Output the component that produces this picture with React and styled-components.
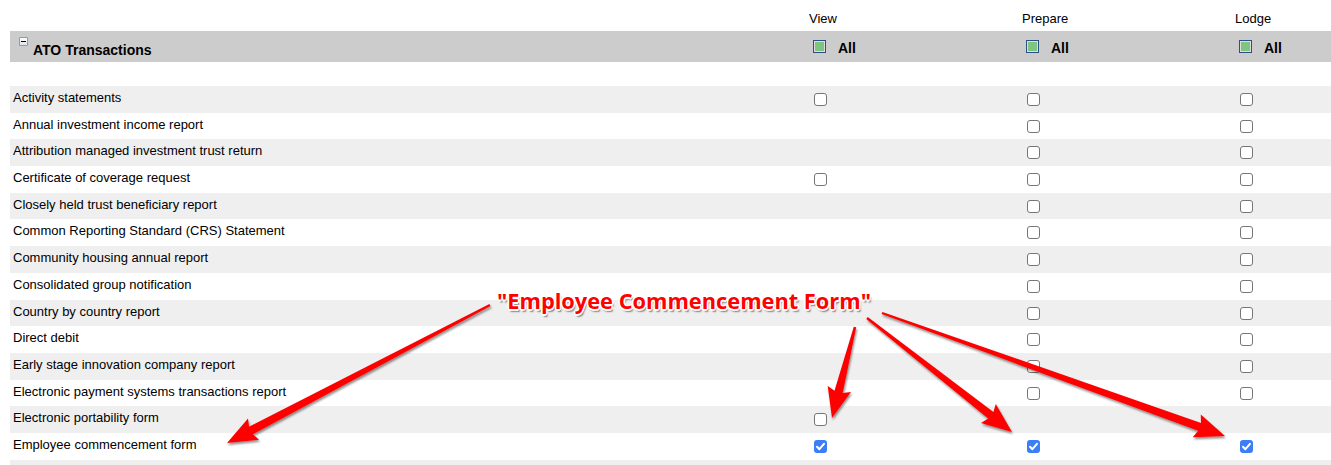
import React from "react"
import styled, { createGlobalStyle } from "styled-components"

const GlobalStyle = createGlobalStyle`
  html, body { margin: 0; padding: 0; background: #ffffff; }
  body { font-family: "Liberation Sans", Arial, sans-serif; color: #000; overflow: hidden; }
`

const COLS = "800px 213px 213px 1fr"

const rows = [
  { name: "Activity statements", v: 0, p: 0, l: 0 },
  { name: "Annual investment income report", p: 0, l: 0 },
  { name: "Attribution managed investment trust return", p: 0, l: 0 },
  { name: "Certificate of coverage request", v: 0, p: 0, l: 0 },
  { name: "Closely held trust beneficiary report", p: 0, l: 0 },
  { name: "Common Reporting Standard (CRS) Statement", p: 0, l: 0 },
  { name: "Community housing annual report", p: 0, l: 0 },
  { name: "Consolidated group notification", p: 0, l: 0 },
  { name: "Country by country report", p: 0, l: 0 },
  { name: "Direct debit", p: 0, l: 0 },
  { name: "Early stage innovation company report", p: 0, l: 0 },
  { name: "Electronic payment systems transactions report", p: 0, l: 0 },
  { name: "Electronic portability form", v: 0 },
  { name: "Employee commencement form", v: 1, p: 1, l: 1 },
  { name: "" },
]

// annotation arrows: start -> tip
const arrows = [
  { s: [490, 305], t: [227, 443] },
  { s: [855, 327], t: [832, 418] },
  { s: [867, 318], t: [1012, 432] },
  { s: [882, 313], t: [1225, 436] },
]

function arrowPoints({ s, t }) {
  const dx = t[0] - s[0]
  const dy = t[1] - s[1]
  const len = Math.hypot(dx, dy)
  const ux = dx / len, uy = dy / len
  const nx = -uy, ny = ux
  const head = 27, hw = 12, w0 = 1.2, w1 = 4.2
  const bx = t[0] - ux * head, by = t[1] - uy * head
  const p = [
    [s[0] + nx * w0, s[1] + ny * w0],
    [bx + nx * w1, by + ny * w1],
    [bx + nx * hw - ux * 3, by + ny * hw - uy * 3],
    [t[0], t[1]],
    [bx - nx * hw - ux * 3, by - ny * hw - uy * 3],
    [bx - nx * w1, by - ny * w1],
    [s[0] - nx * w0, s[1] - ny * w0],
  ]
  return p.map((q) => q[0].toFixed(1) + "," + q[1].toFixed(1)).join(" ")
}

function Box({ checked }) {
  if (checked) {
    return (
      <Styled.Checked>
        <svg width="13" height="13" viewBox="0 0 13 13">
          <path d="M3 6.8 L5.4 9.2 L10 3.8" fill="none" stroke="#fff" strokeWidth="2" strokeLinecap="round" strokeLinejoin="round" />
        </svg>
      </Styled.Checked>
    )
  }
  return <Styled.Unchecked />
}

function Cell({ value }) {
  return <Styled.BoxCell>{value !== undefined && <Box checked={value === 1} />}</Styled.BoxCell>
}

export default function App() {
  return (
    <Styled.Page>
      <GlobalStyle />
      <Styled.Labels>
        <span />
        <Styled.Label>View</Styled.Label>
        <Styled.Label>Prepare</Styled.Label>
        <Styled.Label>Lodge</Styled.Label>
      </Styled.Labels>

      <Styled.Band>
        <Styled.Title>
          <Styled.Toggle />
          <span>ATO Transactions</span>
        </Styled.Title>
        {["v", "p", "l"].map((k) => (
          <Styled.AllCell key={k}>
            <Styled.AllBox />
            <span>All</span>
          </Styled.AllCell>
        ))}
      </Styled.Band>

      <Styled.Spacer />

      {rows.map((r, i) => (
        <Styled.Row key={i} $shade={i % 2 === 0}>
          <Styled.Name>{r.name}</Styled.Name>
          <Cell value={r.v} />
          <Cell value={r.p} />
          <Cell value={r.l} />
        </Styled.Row>
      ))}

      <Styled.Overlay width="1331" height="465">
        <defs>
          <filter id="sh" x="-10%" y="-10%" width="120%" height="120%">
            <feDropShadow dx="1" dy="2" stdDeviation="1.3" floodColor="#000" floodOpacity="0.45" />
          </filter>
        </defs>
        {arrows.map((a, i) => (
          <polygon key={i} points={arrowPoints(a)} fill="#ff0000" filter="url(#sh)" />
        ))}
      </Styled.Overlay>
      <Styled.Callout>"Employee Commencement Form"</Styled.Callout>
    </Styled.Page>
  )
}

const Styled = {
  Page: styled.div`
    position: relative;
    width: 1331px;
    height: 465px;
    padding-left: 10px;
    box-sizing: border-box;
    overflow: hidden;
  `,
  Labels: styled.div`
    display: grid;
    grid-template-columns: ${COLS};
    height: 31px;
    align-items: end;
    padding-bottom: 5px;
    box-sizing: border-box;
    font-size: 13px;
    line-height: 15px;
  `,
  Label: styled.span`
    margin-left: -1px;
  `,
  Band: styled.div`
    display: grid;
    grid-template-columns: ${COLS};
    height: 31px;
    background: #cccccc;
    font-size: 14px;
    font-weight: 700;
    line-height: 16px;
  `,
  Title: styled.div`
    display: flex;
    align-items: flex-start;
    padding: 6px 0 0 9px;
    gap: 5px;
    span { margin-top: 5px; }
  `,
  Toggle: styled.div`
    position: relative;
    width: 7px;
    height: 7px;
    border: 1px solid #8a9bb5;
    border-radius: 1px;
    background: linear-gradient(#ffffff, #dde3ea);
    &::after {
      content: "";
      position: absolute;
      left: 1px;
      right: 1px;
      top: 3px;
      height: 1px;
      background: #000;
    }
  `,
  AllCell: styled.div`
    display: flex;
    align-items: flex-start;
    padding: 9px 0 0 3px;
    gap: 12px;
    span { margin-top: 0px; }
  `,
  AllBox: styled.div`
    width: 11px;
    height: 11px;
    border: 1px solid #2c4f86;
    background: #7fc47f;
    box-shadow: inset 0 0 0 1px #dedede;
  `,
  Spacer: styled.div`
    height: 24px;
  `,
  Row: styled.div`
    display: grid;
    grid-template-columns: ${COLS};
    height: 26.7px;
    background: ${(p) => (p.$shade ? "#efefef" : "#ffffff")};
  `,
  Name: styled.div`
    padding: 4px 0 0 3px;
    font-size: 13px;
    line-height: 15px;
    white-space: nowrap;
  `,
  BoxCell: styled.div`
    padding: 7px 0 0 4px;
  `,
  Unchecked: styled.div`
    width: 11px;
    height: 11px;
    border: 1px solid #767676;
    border-radius: 3px;
    background: #ffffff;
  `,
  Checked: styled.div`
    width: 13px;
    height: 13px;
    border-radius: 3px;
    background: #3b7ef6;
    display: flex;
    svg { display: block; }
  `,
  Overlay: styled.svg`
    position: absolute;
    left: 0;
    top: 0;
    pointer-events: none;
  `,
  Callout: styled.div`
    position: absolute;
    left: 497px;
    top: 287px;
    font-family: "Open Sans", "Liberation Sans", sans-serif;
    font-weight: 700;
    font-size: 21.8px;
    line-height: 28px;
    color: #ff0000;
    white-space: nowrap;
    text-shadow:
      -1px -1px 0 #fff, 1px -1px 0 #fff, -1px 1px 0 #fff, 1px 1px 0 #fff,
      0 -1.5px 0 #fff, 0 1.5px 0 #fff, -1.5px 0 0 #fff, 1.5px 0 0 #fff,
      1.5px 2.5px 1.5px rgba(0, 0, 0, 0.45);
  `,
}
